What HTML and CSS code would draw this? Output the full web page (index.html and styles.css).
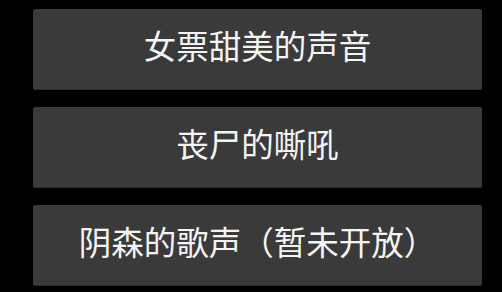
FILE: index.html
```html
<!DOCTYPE html>
<html lang="zh">
<head>
<meta charset="utf-8">
<link rel="stylesheet" href="styles.css">
</head>
<body>
<div class="menu">
  <button class="option">女票甜美的声音</button>
  <button class="option">丧尸的嘶吼</button>
  <button class="option">阴森的歌声（暂未开放）</button>
</div>
</body>
</html>
```
FILE: styles.css
```css
html, body {
  margin: 0;
  padding: 0;
  background: #000;
}
body {
  width: 502px;
  height: 292px;
  overflow: hidden;
}
.menu {
  display: flex;
  flex-direction: column;
  gap: 17px;
  padding: 9px 20px 0 33px;
}
.option {
  display: flex;
  align-items: center;
  justify-content: center;
  height: 81px;
  margin: 0;
  padding: 0 0 8px 0;
  box-sizing: border-box;
  border: none;
  border-bottom: 1px solid #2c2c2c;
  border-radius: 2px;
  background: #3a3a3a;
  color: #f4f4f4;
  font-family: "Noto Sans CJK SC", "Noto Sans", sans-serif;
  font-size: 32.5px;
  line-height: 1;
  white-space: nowrap;
}
```
